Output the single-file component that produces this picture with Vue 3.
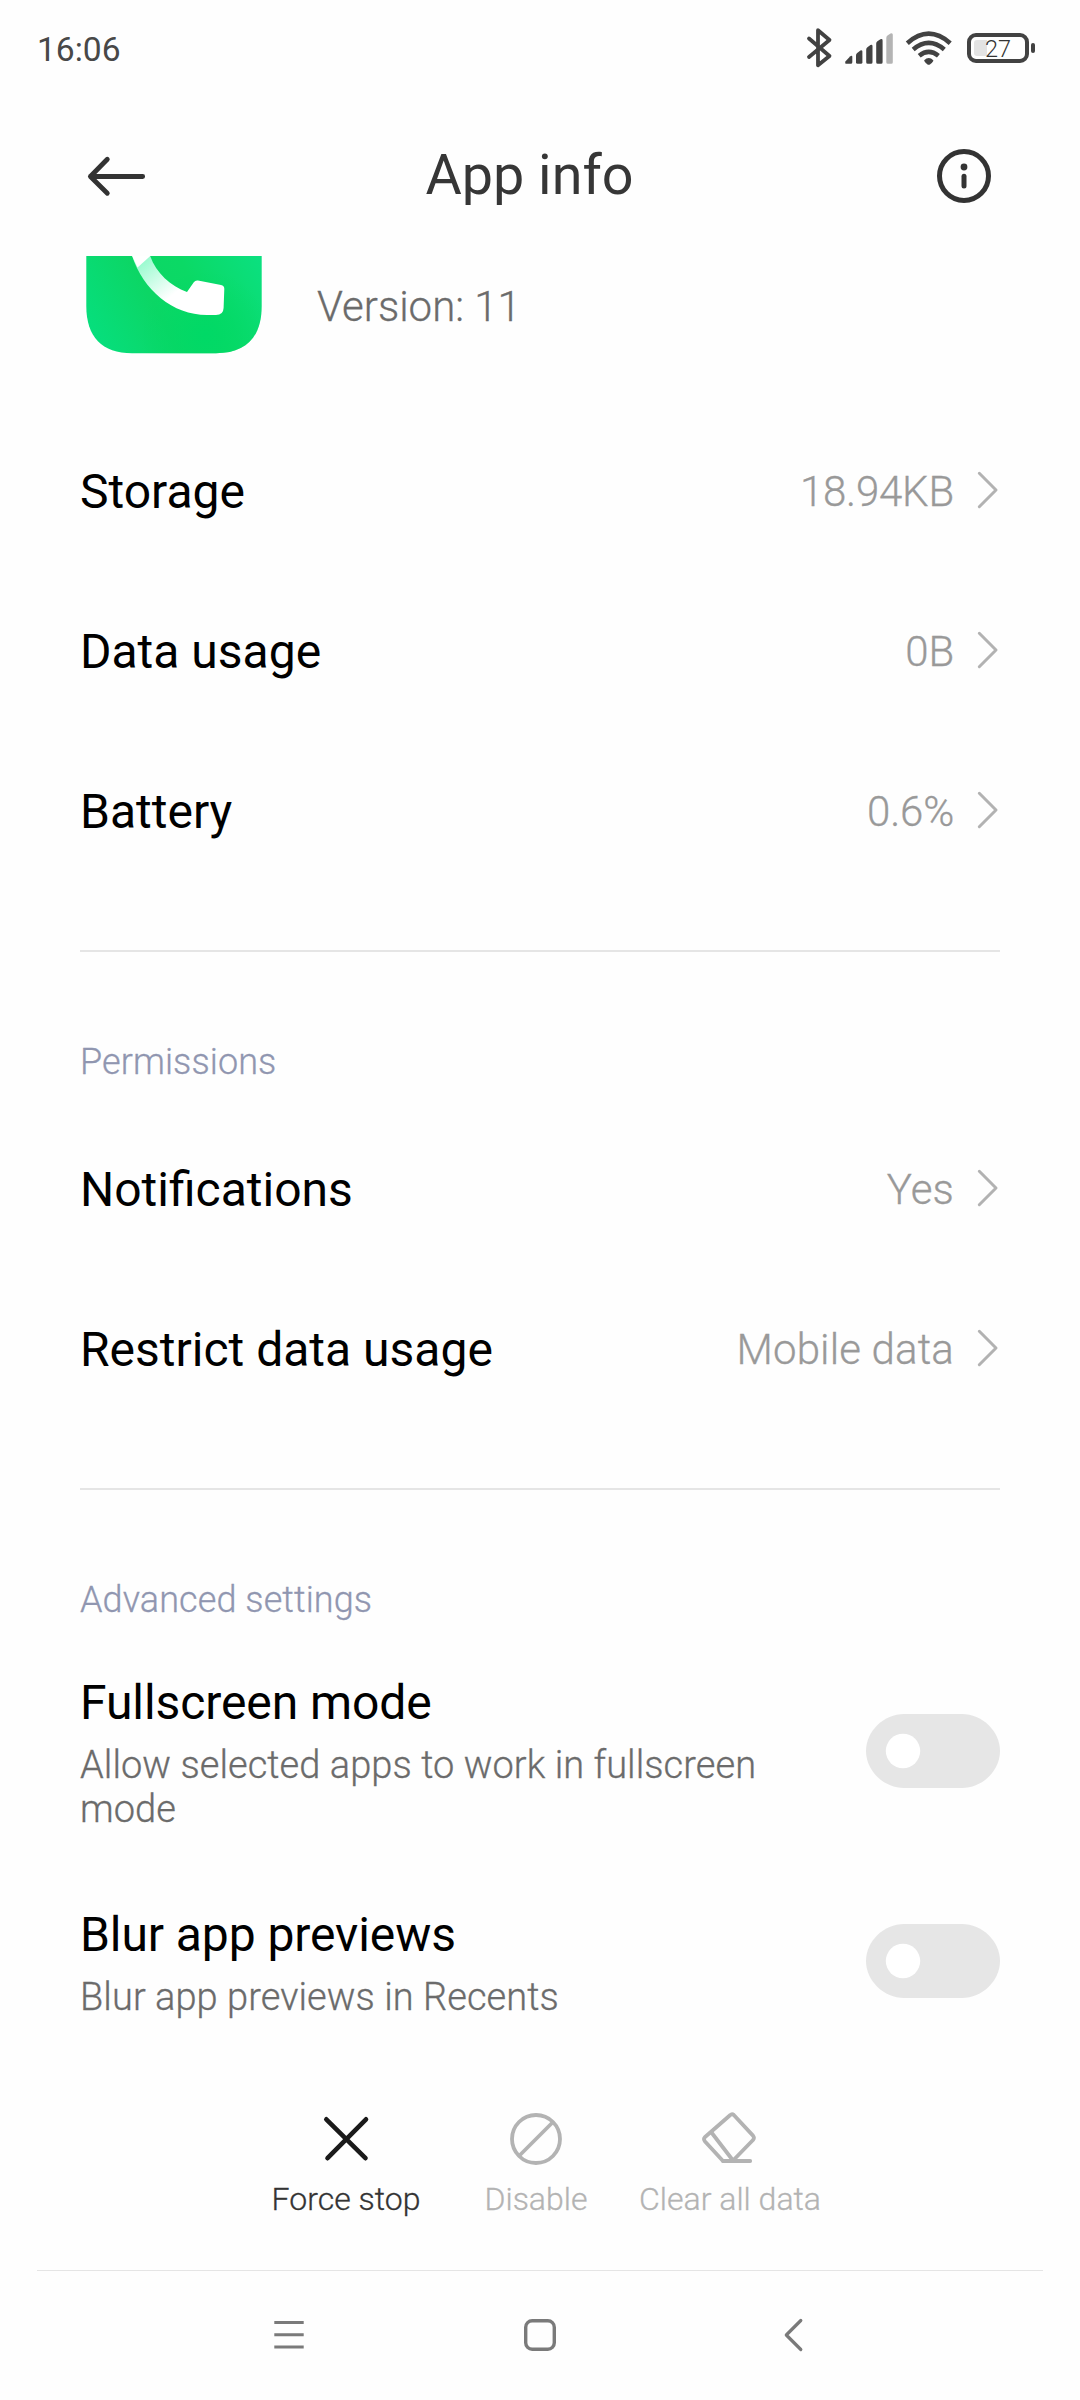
<script setup>
import { ref } from 'vue'

const usage = [
  { label: 'Storage', value: '18.94KB' },
  { label: 'Data usage', value: '0B' },
  { label: 'Battery', value: '0.6%' },
]
const permissions = [
  { label: 'Notifications', value: 'Yes' },
  { label: 'Restrict data usage', value: 'Mobile data' },
]
const advanced = ref([
  { label: 'Fullscreen mode', hint: 'Allow selected apps to work in fullscreen mode', on: false },
  { label: 'Blur app previews', hint: 'Blur app previews in Recents', on: false },
])
</script>

<template>
  <div class="screen">
    <div class="status">
      <span class="clock">16:06</span>
      <div class="indicators">
        <svg class="bt" width="28" height="44" viewBox="805 26 28 44">
          <path d="M809 38.5 829.5 56 818 65.3V30.2L829.5 40 809 57" fill="none" stroke="#424242" stroke-width="3.8" stroke-linecap="round" stroke-linejoin="round" />
        </svg>
        <svg class="signal" width="50" height="44" viewBox="844 26 50 44">
          <g fill="#424242">
            <path d="M845.4 61.5 850 56.5Q852.3 55 852.3 57V62.3Q852.3 63.8 850.8 63.8H846.5Q844.6 63.8 845.4 61.5Z" />
            <path d="M856 55.4Q856 54 857.2 53L860.4 50.6Q862.4 49.6 862.4 51.8V62.3Q862.4 63.8 860.9 63.8H857.5Q856 63.8 856 62.3Z" />
            <path d="M866.2 49.6Q866.2 48 867.4 47.2L870.4 45Q872.5 44.2 872.5 46.2V62.3Q872.5 63.8 871 63.8H867.7Q866.2 63.8 866.2 62.3Z" />
            <path d="M876.2 43.6Q876.2 42 877.4 41.3L880.4 39.3Q882.6 38.5 882.6 40.5V62.3Q882.6 63.8 881.1 63.8H877.7Q876.2 63.8 876.2 62.3Z" />
          </g>
          <path fill="#b4b4b4" d="M886.3 38Q886.3 36.4 887.5 35.6L890.5 33.5Q892.8 32.6 892.8 34.8V62.3Q892.8 63.8 891.3 63.8H887.8Q886.3 63.8 886.3 62.3Z" />
        </svg>
        <svg class="wifi" width="48" height="44" viewBox="905 26 48 44">
          <g fill="none" stroke="#424242" stroke-width="4.6">
            <path d="M907.3 43.2Q928.7 24.2 950.2 43.2" />
            <path d="M913.2 49.4Q928.7 36.2 944.3 49.4" />
            <path d="M919.2 55.8Q928.7 48 938.4 55.8" />
          </g>
          <path d="M924.2 60.2Q928.7 55.6 933.3 60.2C933.6 61.2 930.6 64.7 928.7 64.8 926.9 64.7 924 61.2 924.2 60.2Z" fill="#424242" />
        </svg>
        <div class="battery">
          <div class="cell"><i class="charge"></i><span class="pct">27</span></div>
          <i class="nub"></i>
        </div>
      </div>
    </div>

    <header class="bar">
      <svg width="60" height="44" viewBox="86 154 60 44">
        <path d="M107.3 159.3 90.4 176.5 107.3 193.3M90.4 176.5H142.7" fill="none" stroke="#333" stroke-width="4.8" stroke-linecap="round" stroke-linejoin="round" />
      </svg>
      <h1>App info</h1>
      <svg width="56" height="56" viewBox="936 148 56 56">
        <circle cx="964" cy="176" r="24.5" fill="none" stroke="#333" stroke-width="5" />
        <circle cx="964" cy="167" r="3.4" fill="#333" />
        <path d="M964 176.2V186" stroke="#333" stroke-width="5" stroke-linecap="round" />
      </svg>
    </header>

    <main class="content">
      <section class="app">
        <svg class="app-icon" width="178" height="98" viewBox="85 256 178 98">
          <defs>
            <linearGradient id="tile" x1="86" y1="330" x2="262" y2="235" gradientUnits="userSpaceOnUse">
              <stop offset="0" stop-color="#06df7e" />
              <stop offset=".36" stop-color="#0cd665" />
              <stop offset=".58" stop-color="#0bd965" />
              <stop offset="1" stop-color="#0be184" />
            </linearGradient>
            <linearGradient id="handset" x1="143" y1="262" x2="170" y2="297" gradientUnits="userSpaceOnUse">
              <stop offset="0" stop-color="#9bfbd0" />
              <stop offset="1" stop-color="#fff" />
            </linearGradient>
            <radialGradient id="glow" cx="205" cy="335" r="65" gradientUnits="userSpaceOnUse">
              <stop offset="0" stop-color="#00d966" />
              <stop offset="1" stop-color="#00d966" stop-opacity="0" />
            </radialGradient>
          </defs>
          <path d="M86.3 250H261.7V306C261.7 337 246 353.2 216 353.2H132C102 353.2 86.3 337 86.3 306Z" fill="url(#tile)" />
          <path d="M86.3 250H261.7V306C261.7 337 246 353.2 216 353.2H132C102 353.2 86.3 337 86.3 306Z" fill="url(#glow)" />
          <path d="M131.5 254C142 289 172 315 207 315H216Q223.3 315 223.6 308L224.3 289Q224.4 285.8 221 285L198 280.5Q195.3 280 193.8 282.3L187 292C170 286 155 272 149.5 254Z" fill="url(#handset)" />
          <path d="M131.2 254 137.5 267.5 150.3 256 149.5 254Z" fill="#fff" />
        </svg>
        <span class="version">Version: 11</span>
      </section>

      <section class="group">
        <div v-for="r in usage" :key="r.label" class="row">
          <span class="label">{{ r.label }}</span>
          <span class="value">{{ r.value }}</span>
          <svg class="chev" width="22" height="40" viewBox="0 0 22 40"><path d="M2.3 3.3 19 20 2.3 36.7" fill="none" stroke="#b2b2b2" stroke-width="3" stroke-linecap="round" stroke-linejoin="round" /></svg>
        </div>
      </section>

      <section class="group ruled">
        <h2>Permissions</h2>
        <div v-for="r in permissions" :key="r.label" class="row">
          <span class="label">{{ r.label }}</span>
          <span class="value wide">{{ r.value }}</span>
          <svg class="chev" width="22" height="40" viewBox="0 0 22 40"><path d="M2.3 3.3 19 20 2.3 36.7" fill="none" stroke="#b2b2b2" stroke-width="3" stroke-linecap="round" stroke-linejoin="round" /></svg>
        </div>
      </section>

      <section class="group ruled">
        <h2>Advanced settings</h2>
        <div v-for="s in advanced" :key="s.label" class="switch-row">
          <div class="copy">
            <span class="label">{{ s.label }}</span>
            <p>{{ s.hint }}</p>
          </div>
          <svg class="toggle" width="134" height="74" viewBox="0 0 134 74" @click="s.on = !s.on">
            <path :fill="s.on ? '#0d84ff' : '#e6e6e6'" d="M38 0H96C116 0 134 17 134 37S116 74 96 74H38C18 74 0 57 0 37S18 0 38 0Z" />
            <circle :cx="s.on ? 97 : 37" cy="37" r="17.2" fill="#fff" />
          </svg>
        </div>
      </section>
    </main>

    <footer class="actions">
      <div class="action active">
        <svg width="56" height="56" viewBox="318 2111 56 56">
          <path d="M326.3 2119.3 365.5 2158.2M366 2119.3 327.5 2158.2" stroke="#1a1a1a" stroke-width="4.6" stroke-linecap="round" />
        </svg>
        <span>Force stop</span>
      </div>
      <div class="action">
        <svg width="56" height="56" viewBox="508 2111 56 56">
          <g fill="none" stroke="#b3b3b3" stroke-width="3.8">
            <circle cx="536" cy="2139" r="24" />
            <path d="M519 2156 553 2122" />
          </g>
        </svg>
        <span>Disable</span>
      </div>
      <div class="action">
        <svg width="60" height="56" viewBox="700 2111 60 56">
          <g fill="none" stroke="#b3b3b3" stroke-width="3.8" stroke-linecap="round" stroke-linejoin="round">
            <path d="M730.3 2115Q732 2113.3 733.8 2115L753 2135.6Q754.8 2137.8 753 2140L732.6 2161H723L704.8 2141.2Q703.2 2139 704.8 2137.2Z" />
            <path d="M711.5 2132.5 733 2160.5M723 2161H750.2" />
          </g>
        </svg>
        <span>Clear all data</span>
      </div>
    </footer>

    <nav class="nav">
      <svg width="36" height="36" viewBox="0 0 36 36"><path d="M3.3 5.5H32.7M3.3 17.7H32.7M3.3 29.9H32.7" stroke="#7a7a7a" stroke-width="3" /></svg>
      <svg width="36" height="36" viewBox="0 0 36 36"><rect x="3.7" y="3.7" width="28.6" height="28.6" rx="6.5" fill="none" stroke="#7a7a7a" stroke-width="3.4" /></svg>
      <svg width="36" height="36" viewBox="0 0 36 36"><path d="M27.8 3.5 13.3 18 27.8 32.5" fill="none" stroke="#7a7a7a" stroke-width="3.2" stroke-linecap="round" stroke-linejoin="round" /></svg>
    </nav>
  </div>
</template>

<style>
body {
  background: #fefefe;
}
</style>

<style scoped>
.screen {
  box-sizing: border-box;
  width: 1080px;
  height: 2400px;
  display: flex;
  flex-direction: column;
  overflow: hidden;
  background: #fefefe;
  color: #000;
  font-family: Roboto, 'Noto Sans', sans-serif;
  font-weight: 400;
}
svg {
  display: block;
  flex: none;
}
.status {
  flex: none;
  height: 96px;
  display: flex;
  align-items: center;
  justify-content: space-between;
  padding: 0 45px 0 37px;
}
.clock {
  font-size: 33.6px;
  line-height: 40px;
  padding-top: 4px;
  color: #484848;
}
.indicators {
  display: flex;
  align-items: center;
}
.signal {
  margin-left: 11px;
}
.wifi {
  margin-left: 11px;
}
.battery {
  display: flex;
  align-items: center;
  gap: 2px;
  margin-left: 14px;
}
.cell {
  box-sizing: border-box;
  width: 62px;
  height: 30px;
  border: 4px solid #424242;
  border-radius: 9px;
  display: flex;
  align-items: center;
  padding-left: 3px;
}
.charge {
  width: 13px;
  height: 16px;
  border-radius: 3px 0 0 3px;
  background: #e3e3e3;
}
.pct {
  font-size: 23.5px;
  line-height: 22px;
  font-weight: 300;
  color: #333;
  margin-left: -2px;
  padding-top: 1px;
}
.nub {
  width: 4px;
  height: 10px;
  border-radius: 2px;
  background: #424242;
}
.bar {
  flex: none;
  height: 160px;
  display: flex;
  align-items: center;
  justify-content: space-between;
  padding: 0 88px 0 86px;
}
.bar h1 {
  margin: 0 0 0 -23px;
  padding: 0 0 2px 0;
  font-size: 55.7px;
  line-height: 66px;
  font-weight: 400;
  color: #363636;
}
.content {
  flex: none;
  height: 1824px;
  overflow: hidden;
  padding: 0 80px;
}
.app {
  height: 155px;
  display: flex;
  align-items: flex-start;
  padding-left: 5px;
}
.version,
.value,
h2,
.copy p,
.action span {
  font-weight: 300;
  -webkit-text-stroke: 0.3px currentColor;
}
.version {
  margin: 26px 0 0 54px;
  font-size: 42px;
  line-height: 50px;
  color: #6b6b6b;
}
.group {
  padding-bottom: 59px;
}
.ruled {
  border-top: 2px solid #e5e5e5;
}
h2 {
  margin: 0;
  height: 157px;
  box-sizing: border-box;
  padding-top: 88px;
  font-size: 36px;
  line-height: 44px;
  letter-spacing: 0.08px;
  color: #9096b0;
}
.row {
  height: 160px;
  display: flex;
  align-items: center;
}
.label {
  font-size: 48px;
  line-height: 56px;
}
.row .label,
.row .value {
  padding-top: 2px;
}
.value {
  margin-left: auto;
  font-size: 42px;
  line-height: 50px;
  letter-spacing: -0.2px;
  color: #999;
}
.value.wide {
  letter-spacing: 0.15px;
}
.chev {
  margin: 0 1px 2px 23px;
}
.switch-row {
  display: flex;
  align-items: center;
  justify-content: space-between;
  padding: 28px 0 48px;
}
.copy {
  width: 690px;
}
.copy .label {
  display: block;
  letter-spacing: -0.08px;
}
.copy p {
  margin: 12px 0 0;
  font-size: 38px;
  line-height: 44px;
  letter-spacing: 0.055px;
  color: #6b6b6b;
}
.toggle {
  margin-bottom: 4px;
}
.actions {
  flex: none;
  box-sizing: border-box;
  height: 190px;
  display: flex;
  padding: 31px 0 0 251px;
}
.action {
  width: 190px;
  display: flex;
  flex-direction: column;
  align-items: center;
  gap: 13px;
  font-size: 32px;
  line-height: 38px;
  white-space: nowrap;
  color: #b3b3b3;
}
.action:last-child {
  width: 198px;
}
.active {
  color: #333;
}
.nav {
  flex: 1;
  display: flex;
  align-items: center;
  justify-content: space-between;
  margin: 0 37px;
  padding: 0 234px 2px;
  border-top: 1px solid #e5e5e5;
}
</style>
